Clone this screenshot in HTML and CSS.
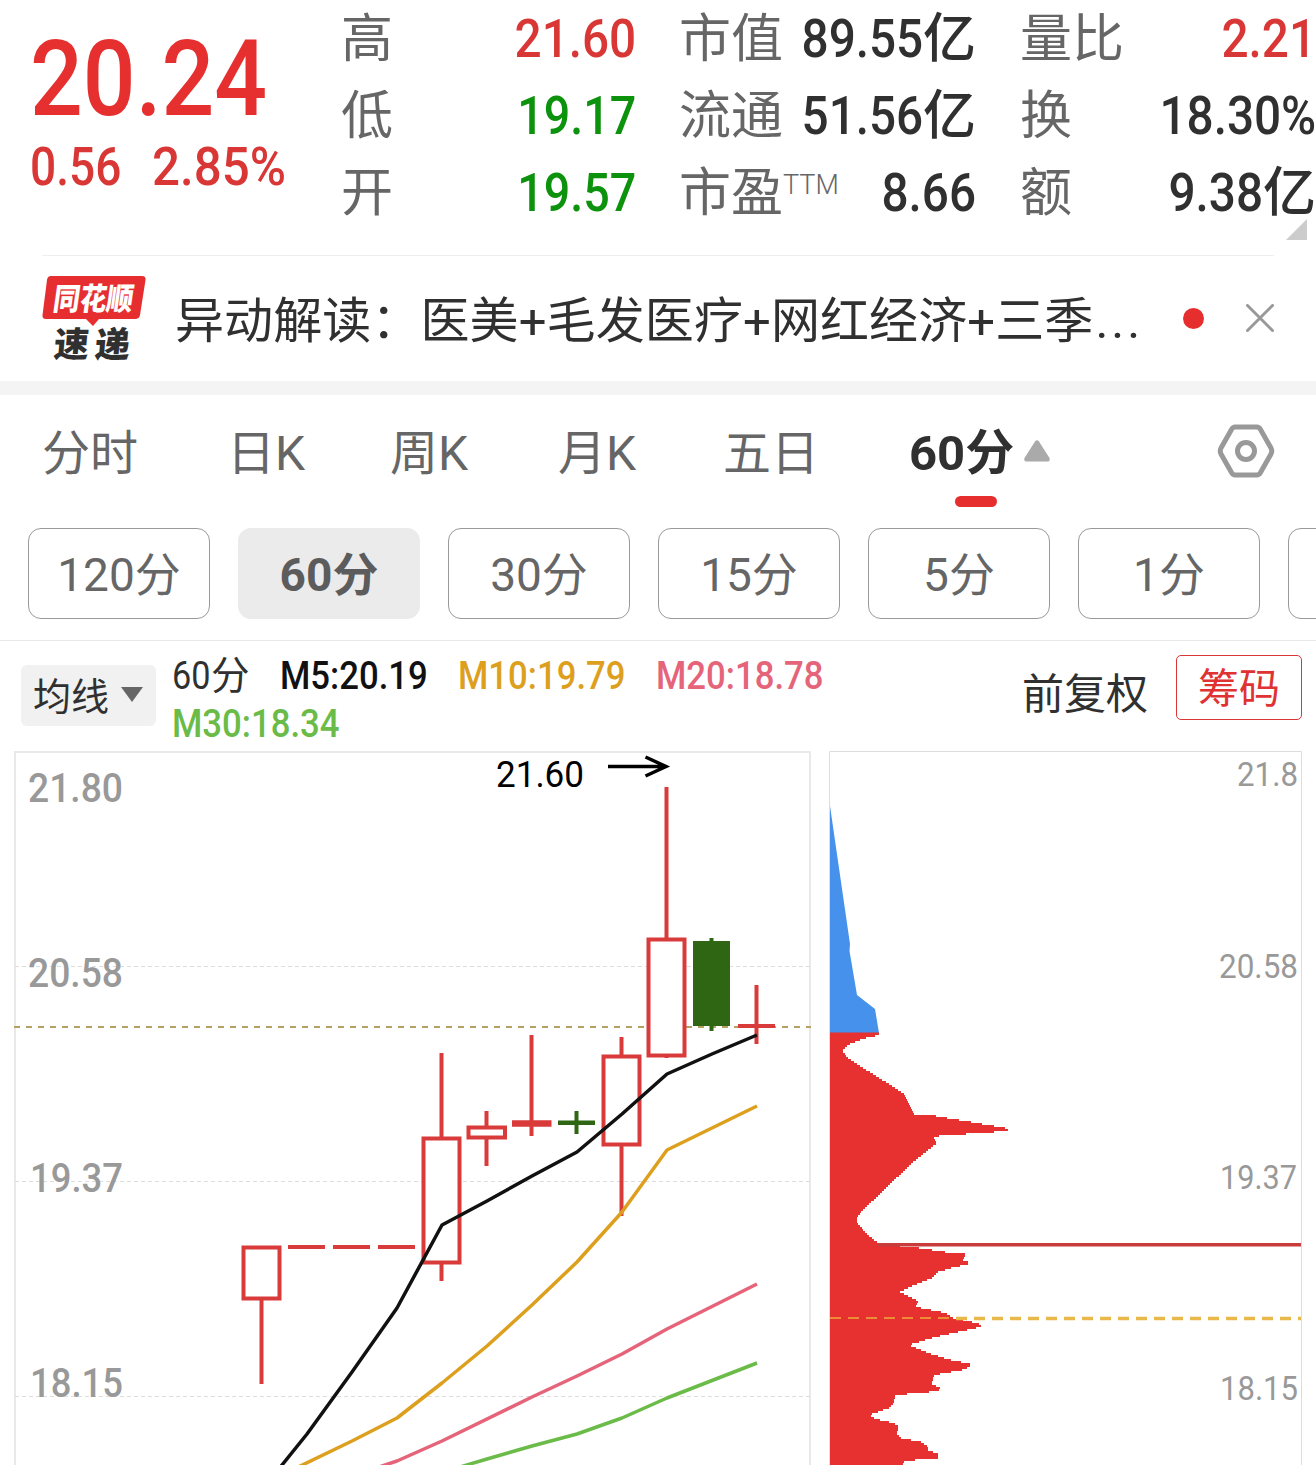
FILE: index.html
```html
<!DOCTYPE html>
<html lang="zh-CN">
<head>
<meta charset="utf-8">
<title>行情 60分</title>
<link rel="stylesheet" href="styles.css">
</head>
<body>
<header class="quote">
  <div class="price">
    <div class="last"><span class="num">20.24</span></div>
    <div class="change"><span class="num">0.56</span><span class="num pct">2.85%</span></div>
  </div>
  <dl class="stats stats-a">
    <div><dt>高</dt><dd class="up"><span class="num">21.60</span></dd></div>
    <div><dt>低</dt><dd class="down"><span class="num">19.17</span></dd></div>
    <div><dt>开</dt><dd class="down"><span class="num">19.57</span></dd></div>
  </dl>
  <dl class="stats stats-b">
    <div><dt>市值</dt><dd><span class="num">89.55</span>亿</dd></div>
    <div><dt>流通</dt><dd><span class="num">51.56</span>亿</dd></div>
    <div><dt>市盈<sup>TTM</sup></dt><dd><span class="num">8.66</span></dd></div>
  </dl>
  <dl class="stats stats-c">
    <div><dt>量比</dt><dd class="up"><span class="num">2.21</span></dd></div>
    <div><dt>换</dt><dd><span class="num">18.30%</span></dd></div>
    <div><dt>额</dt><dd><span class="num">9.38</span>亿</dd></div>
  </dl>
  <i class="corner"></i>
</header>

<section class="news">
  <svg class="logo" width="104" height="88" viewBox="0 0 104 88">
    <path d="M9 1H100Q104 1 103.500 5L98 40Q97.500 44 93 44H57L51 51L44 44H4Q0 44 .5 40L5 5Q5.500 1 9 1Z" fill="#e62e31"/>
    <text class="logo-text" transform="translate(10 34.500) skewX(-8)" textLength="80" lengthAdjust="spacingAndGlyphs" font-size="31" fill="#fff">同花顺</text>
    <text class="logo-text" transform="translate(11 82) skewX(-5)" font-size="35" fill="#303030"><tspan>速</tspan><tspan x="41">递</tspan></text>
  </svg>
  <p>异动解读：<span>医美+毛发医疗+网红经济+三季<span class="more">...</span></span></p>
  <i class="dot"></i>
  <svg class="close" width="28" height="28" viewBox="0 0 28 28"><path d="M1.500 1.500L26.500 26.500M26.500 1.500L1.500 26.500"/></svg>
</section>

<nav class="tabs">
  <a>分时</a><a>日K</a><a>周K</a><a>月K</a><a>五日</a>
  <a class="active">60分<svg width="26" height="22" viewBox="0 0 26 22"><path d="M11 1.500Q13-1 15 1.500L25.500 18Q26.500 21.500 23 21.500H3Q-.5 21.500 .5 18Z"/></svg></a>
  <svg class="gear" width="58" height="54" viewBox="0 0 58 54"><path d="M18 3H40Q42 3 43.500 5.500L54 24Q55.500 27 54 30L43.500 48.500Q42 51 40 51H18Q16 51 14.500 48.500L4 30Q2.500 27 4 24L14.500 5.500Q16 3 18 3Z"/><circle cx="29" cy="27" r="8.500"/></svg>
</nav>

<div class="chips">
  <button>120分</button><button class="on">60分</button><button>30分</button><button>15分</button><button>5分</button><button>1分</button><button></button>
</div>

<section class="legend">
  <button class="select">均线<i></i></button>
  <div class="averages">
    <span class="period"><span class="num">60</span>分</span>
    <span class="m5 num">M5:20.19</span>
    <span class="m10 num">M10:19.79</span>
    <span class="m20 num">M20:18.78</span>
    <span class="m30 num">M30:18.34</span>
  </div>
  <span class="adjust">前复权</span>
  <button class="cost">筹码</button>
</section>

<main class="charts">
  <svg class="kline" width="797" height="714" viewBox="14 751 797 714">
    <path class="frame" d="M15 1470V752H810V1470"/>
    <path class="grid" d="M15 966.500H810M15 1181.500H810M15 1396.500H810"/>
    <path class="now" d="M14 1027H811"/>
    <g class="axis">
      <text x="28" y="801.500" textLength="95">21.80</text>
      <text x="28" y="986.500" textLength="95">20.58</text>
      <text x="30" y="1191.500" textLength="93">19.37</text>
      <text x="30" y="1396.500" textLength="93">18.15</text>
    </g>
    <g class="rise">
      <path d="M261.500 1299V1384M288 1247H325M333 1247H370M378 1247H415M441.500 1053V1137M441.500 1264V1281M486.500 1111V1126M486.500 1139V1166M531.500 1035V1136M621.500 1037V1055M621.500 1146V1216M666.500 787V938M666.500 1055V1058M756.500 985V1044M738 1026H775"/>
      <path class="thick" d="M512 1123.500H551.500"/>
      <rect x="243.500" y="1247.500" width="36" height="51"/>
      <rect x="423.500" y="1138.500" width="36" height="124"/>
      <rect x="468.500" y="1127.500" width="36.500" height="10"/>
      <rect x="603.500" y="1056.500" width="36" height="88"/>
      <rect x="648.500" y="939.500" width="36" height="116"/>
    </g>
    <path class="fall" d="M558 1120.500H574.500V1111H578.500V1120.500H595V1125H578.500V1134H574.500V1125H558ZM693 941H709.500V938H713.500V941H730V1026H713.500V1031H709.500V1026H693Z"/>
    <g class="ma">
      <polyline stroke="#111" points="278,1470 307,1434 352,1372 397,1308 442,1225 487,1201 532,1176 577,1152 622,1114 667,1074 712,1054 757,1035"/>
      <polyline stroke="#dda01e" points="292,1470 352,1441 397,1418 442,1383 487,1346 532,1305 577,1262 622,1212 667,1150 757,1106"/>
      <polyline stroke="#e5647a" points="370,1470 397,1461 442,1441 532,1397 577,1376 622,1354 667,1329 757,1284"/>
      <polyline stroke="#6abb48" points="450,1470 487,1459 532,1446 577,1434 622,1418 667,1398 757,1363"/>
    </g>
    <text class="peak" x="496" y="787" textLength="88">21.60</text>
    <path class="arrow" d="M608 766.500H665M645.500 757L666 766.500L645.500 776"/>
  </svg>

  <svg class="profile" width="473" height="714" viewBox="829 751 473 714">
    <path class="edge" d="M829.500 1470V751.500H1301.500V1470"/>
    <path class="above" d="M830 806L850 944L849.500 951L857 995L875 1009L879 1033H830Z"/>
    <path class="below" id="below"/>
    <path class="level" d="M878 1244.800H1301"/>
    <path class="cost-in" d="M830 1318H953"/>
    <path class="cost-out" d="M956 1318.500H1301"/>
    <g class="axis2">
      <text x="1237" y="786" textLength="61">21.8</text>
      <text x="1219" y="978" textLength="79">20.58</text>
      <text x="1220" y="1189" textLength="77">19.37</text>
      <text x="1220" y="1400" textLength="78">18.15</text>
    </g>
  </svg>
</main>
<script src="chart.js"></script>
</body>
</html>
```
FILE: styles.css
```css
* { box-sizing: border-box; }
body { margin: 0; width: 1316px; height: 1465px; overflow: hidden; background: #fff; color: #303030; font-family: Roboto, "Noto Sans CJK SC", sans-serif; }
button { font: inherit; color: inherit; padding: 0; }
.num { display: inline-block; font-family: Roboto, sans-serif; font-weight: 500; transform: scaleX(.9); transform-origin: right; white-space: nowrap; }
.up { color: #d93636; }
.down { color: #0c920c; }

.quote { position: relative; height: 255px; display: flex; }
.price { width: 341px; padding: 25px 0 0 30px; color: #e62f2f; }
.last { height: 109px; font-size: 105px; line-height: 110px; }
.last .num { transform: scaleX(.885); transform-origin: left; }
.change { display: flex; height: 66px; line-height: 66px; font-size: 53px; color: #d93636; }
.change .num { width: 122px; transform: scaleX(.87); transform-origin: left; }
.change .pct { transform: scaleX(.93); }
.stats { margin: 0; padding-top: 1px; }
.stats div { display: flex; justify-content: space-between; align-items: center; height: 77px; line-height: 77px; }
.stats dt { font-size: 52px; color: #666; }
.stats dd { margin: 0; font-size: 53px; font-weight: 500; display: flex; }
.stats .down .num { transform: scaleX(.88); }
.stats-a { width: 295px; }
.stats-b { width: 339px; padding-left: 43px; margin-right: 1px; }
.stats-b dd { margin-right: -1px; }
.stats-c { width: 340px; padding-left: 44px; flex: none; }
sup { font-size: 27px; line-height: 1; font-weight: 300; vertical-align: 17px; }
.corner { position: absolute; left: 1286px; top: 219px; border: solid transparent; border-width: 0 0 21px 21px; border-bottom-color: #ccc; }

.news { display: flex; align-items: center; height: 140px; padding: 0 42px; border-bottom: 14px solid #f4f4f4; background: linear-gradient(#eee, #eee) 42px 0 / 1232px 1px no-repeat; }
.logo { flex: none; margin-top: 2px; overflow: visible; }
.logo-text { font-family: "Noto Sans CJK SC", sans-serif; font-weight: 900; }
.news p { margin: 8px 0 0 29px; width: 978px; font-size: 49px; line-height: 70px; white-space: nowrap; letter-spacing: .1px; }
.more { letter-spacing: 3px; margin-left: 2px; }
.dot { width: 21px; height: 21px; margin-left: 30px; border-radius: 50%; background: #e62e2e; }
.close { margin-left: 42px; fill: none; stroke: #999; stroke-width: 3; stroke-linecap: round; }

.tabs { position: relative; display: flex; height: 133px; padding-left: 42px; font-size: 48px; line-height: 117px; color: #666; }
.tabs a { white-space: nowrap; }
.tabs a:nth-child(1) { width: 185px; }
.tabs a:nth-child(2) { width: 163px; }
.tabs a:nth-child(3) { width: 168px; }
.tabs a:nth-child(4) { width: 165px; }
.tabs a:nth-child(5) { width: 186px; }
.tabs .active { position: relative; width: 310px; color: #303030; font-weight: 700; font-size: 49px; }
.active svg { margin-left: 10px; fill: #aaa; vertical-align: 8px; }
.active::after { content: ""; position: absolute; left: 46px; top: 101px; width: 42px; height: 11px; border-radius: 6px; background: #e62e2e; }
.gear { margin-top: 29px; margin-left: -2px; fill: none; stroke: #999; stroke-width: 5; }

.chips { display: flex; gap: 28px; height: 113px; padding-left: 28px; border-bottom: 1px solid #e8e8e8; overflow: hidden; }
.chips button { flex: none; width: 182px; height: 91px; padding-top: 3px; border: 1px solid #999; border-radius: 13px; background: #fff; color: #666; font-size: 46px; line-height: 86px; }
.chips .on { border: 0; background: #ebebeb; font-weight: 700; color: #5c5c5c; }

.legend { display: flex; height: 110px; padding-left: 21px; }
.select { width: 135px; height: 61px; margin-top: 24px; padding: 4px 0 0 12px; border: 0; border-radius: 6px; background: #f1f1f1; display: flex; align-items: center; font-size: 38px; line-height: 57px; }
.select i { margin: -6px 0 0 12px; border: solid transparent; border-width: 15px 11px 0; border-top-color: #666; }
.averages { width: 850px; margin-left: 16px; padding-top: 11px; display: grid; grid-template-columns: 108px 178px 198px 1fr; grid-auto-rows: 48px; font-size: 39px; line-height: 48px; }
.averages .num { transform-origin: left; transform: scaleX(.89); justify-self: start; }
.period { display: flex; font-size: 38.500px; }
.period .num { width: 39px; font-weight: 400; }
.m5 { color: #111; }
.m10 { color: #dda01e; }
.m20 { color: #e5647a; }
.m30 { color: #6abb48; }
.adjust { width: 154px; line-height: 107px; font-size: 42px; white-space: nowrap; }
.cost { width: 126px; height: 65px; margin-top: 14px; padding-top: 3px; border: 1px solid #d93636; border-radius: 5px; background: #fff; color: #e03232; font-size: 41px; line-height: 60px; flex: none; }

.charts { display: flex; gap: 18px; padding-left: 14px; height: 714px; }
.charts svg { flex: none; font-family: Roboto, sans-serif; }
.charts path { fill: none; }
.charts .above { fill: #4591ec; }
.charts .below { fill: #e73030; }
.level { stroke: #c93c3c; stroke-width: 3.500; }
.frame { stroke: #e9e9e9; stroke-width: 2; }
.edge { stroke: #ddd; }
.grid { stroke: #ddd; stroke-dasharray: 4 3; }
.now { stroke: #b7a160; stroke-width: 2; stroke-dasharray: 6 6; }
.axis { font-size: 40px; font-weight: 500; fill: #999; }
.axis2 { font-size: 34px; fill: #999; }
.rise { fill: #fff; stroke: #d93b3b; stroke-width: 4; }
.thick { stroke-width: 6.500; }
.charts .fall { fill: #2f6613; }
.ma { fill: none; stroke-width: 3.500; stroke-linejoin: round; }
.peak { font-size: 37px; fill: #000; }
.arrow { stroke: #000; stroke-width: 3.500; }
.cost-in { stroke: #ed8b36; stroke-width: 2; stroke-dasharray: 11 7; }
.cost-out { stroke: #e9b84a; stroke-width: 3.500; stroke-dasharray: 11 7; }
```
FILE: chart.js
```js
// Condense axis figures to their column width.
document.querySelectorAll(".charts text").forEach(t => t.setAttribute("lengthAdjust", "spacingAndGlyphs"));

// Chip distribution under the current price, drawn as 2px rows: [right edge, y].
const edge = [
  [879,1033],[879,1035],[862,1039],[848,1045],[842,1051],[849,1059],[903,1093],[914,1114],[933,1115.5],
  [1008,1128.5],[1008,1131],[952,1135],[933,1136.5],[937,1143],[911,1164],[861,1212],[857,1218],[857,1223],
  [868,1235],[878,1243],[900,1246],[913,1247],[929,1249.5],[945,1252],[965,1253.5],[965,1257],[963,1260],
  [968,1262],[968,1264],[951,1268],[938,1272],[932,1278],[910,1287],[900,1292],[918,1301],[916,1307],
  [946,1313],[953,1318],[968,1321],[981,1324.5],[981,1327],[953,1333],[932,1338],[909,1345],[931,1354],
  [951,1360],[970,1364],[970,1367],[962,1370],[934,1375],[932,1384],[940,1388],[939,1391],[918,1393],
  [895,1395],[894,1403],[889,1408],[869,1415],[876,1419],[893,1423],[898,1426],[897,1434],[901,1438],
  [921,1442],[928,1447],[928,1450],[938,1454],[938,1458],[904,1461],[901,1467]
];
let d = "M830 1032.500H879";
let i = 0;
for (let y = 1033; y < 1465; y += 2) {
  while (i < edge.length - 2 && edge[i + 1][1] < y + 1) i++;
  const [x0, y0] = edge[i], [x1, y1] = edge[i + 1];
  const x = x0 + (x1 - x0) * Math.max(0, Math.min(1, (y + 1 - y0) / (y1 - y0)));
  d += `V${y}H${Math.round(x)}V${y + 2}`;
}
document.getElementById("below").setAttribute("d", d + "H830Z");
```
